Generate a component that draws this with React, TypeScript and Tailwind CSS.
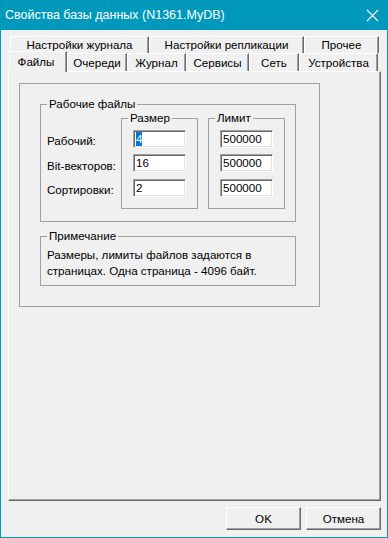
import React from 'react';

const backTabs = [
  { label: 'Настройки журнала', w: 'w-[139px]' },
  { label: 'Настройки репликации', w: 'w-[155px]' },
  { label: 'Прочее', w: 'w-[75px]' },
];

const frontTabs = [
  { label: 'Файлы', w: 'w-[58px]', active: true },
  { label: 'Очереди', w: 'w-[60px]' },
  { label: 'Журнал', w: 'w-[59px]' },
  { label: 'Сервисы', w: 'w-[63px]' },
  { label: 'Сеть', w: 'w-[50px]' },
  { label: 'Устройства', w: 'w-[79px]' },
];

const rows = [
  { label: 'Рабочий:', size: '4', limit: '500000' },
  { label: 'Bit-векторов:', size: '16', limit: '500000' },
  { label: 'Сортировки:', size: '2', limit: '500000' },
];

function Field({ value, selected }: { value: string; selected?: boolean }) {
  return (
    <div className="w-[53px] h-[18px] bg-white border border-t-[#a0a0a0] border-l-[#a0a0a0] border-b-white border-r-white shadow-[inset_1px_1px_0_#696969,inset_-1px_-1px_0_#e3e3e3] pl-[2px] flex items-center leading-[14px]">
      {selected ? <span className="bg-[#0078d7] text-white">{value}</span> : <span>{value}</span>}
    </div>
  );
}

function Group({ title, className, children }: { title: string; className: string; children?: React.ReactNode }) {
  return (
    <fieldset className={`border border-[#a0a0a0] ${className}`}>
      <legend className="ml-[6px] px-[2px] leading-[14px]">{title}</legend>
      {children}
    </fieldset>
  );
}

function Button({ children }: { children: React.ReactNode }) {
  return (
    <button className="w-[75px] h-[23px] bg-[#f0f0f0] border border-t-white border-l-white border-r-[#696969] border-b-[#696969] shadow-[inset_-1px_-1px_0_#a0a0a0] flex items-center justify-center leading-[14px]">
      {children}
    </button>
  );
}

export default function App() {
  return (
    <div className="w-[388px] h-[538px] bg-[#f0f0f0] border border-[#0099bc] flex flex-col font-['Liberation_Sans',Arial,sans-serif] text-[11.6px] text-black">
      {/* Title bar */}
      <div className="h-[29px] shrink-0 bg-[#0099bc] flex items-center justify-between pl-[4px] pr-[7px] text-white">
        <span className="text-[12.5px]">Свойства базы данных (N1361.MyDB)</span>
        <svg width="13" height="13" viewBox="0 0 13 13" className="mr-[1px]">
          <path d="M1 1L12 12M12 1L1 12" stroke="white" strokeWidth="1.1" fill="none" />
        </svg>
      </div>

      <div className="pl-[7px] pr-[6px]">
        {/* Back tab row */}
        <div className="flex mt-[6px] ml-[2px] h-[17px]">
          {backTabs.map((t) => (
            <div
              key={t.label}
              className={`${t.w} h-[17px] border-l border-t border-l-white border-t-white border-r border-r-[#696969] shadow-[inset_-1px_0_0_#a0a0a0] flex items-center justify-center leading-[14px]`}
            >
              {t.label}
            </div>
          ))}
        </div>

        {/* Front tab row */}
        <div className="flex items-end mt-[-2px] ml-[1px] h-[20px] relative z-10">
          {frontTabs.map((t) =>
            t.active ? (
              <div
                key={t.label}
                className={`${t.w} h-[21px] mb-[-1px] bg-[#f0f0f0] border-l border-t border-l-white border-t-white border-r border-r-[#696969] shadow-[inset_-1px_0_0_#a0a0a0] flex items-start justify-center pt-[3px] leading-[14px]`}
              >
                <span className="mr-[4px]">{t.label}</span>
              </div>
            ) : (
              <div
                key={t.label}
                className={`${t.w} h-[18px] border-l border-t border-l-white border-t-white border-r border-r-[#696969] shadow-[inset_-1px_0_0_#a0a0a0] flex items-center justify-center leading-[14px]`}
              >
                {t.label}
              </div>
            )
          )}
        </div>

        {/* Tab panel */}
        <div className="h-[430px] border border-t-white border-l-white border-r-[#696969] border-b-[#696969] shadow-[inset_-1px_-1px_0_#a0a0a0] pl-[10px] pt-[11px]">
          <div className="w-[301px] h-[224px] border border-[#a0a0a0] pl-[20px] pt-[13px]">
            <Group title="Рабочие файлы" className="w-[256px] h-[125px]">
              <div className="flex">
                <div className="w-[80px] pl-[6px] flex flex-col leading-[14px]">
                  <span className="mt-[23px]">{rows[0].label}</span>
                  <span className="mt-[11px]">{rows[1].label}</span>
                  <span className="mt-[10px]">{rows[2].label}</span>
                </div>
                <Group title="Размер" className="w-[77px] h-[98px]">
                  <div className="flex flex-col pl-[11px] pt-[5px]">
                    <Field value={rows[0].size} selected />
                    <div className="mt-[6px]"><Field value={rows[1].size} /></div>
                    <div className="mt-[7px]"><Field value={rows[2].size} /></div>
                  </div>
                </Group>
                <Group title="Лимит" className="w-[77px] h-[98px] ml-[10px]">
                  <div className="flex flex-col pl-[11px] pt-[5px]">
                    <Field value={rows[0].limit} />
                    <div className="mt-[6px]"><Field value={rows[1].limit} /></div>
                    <div className="mt-[7px]"><Field value={rows[2].limit} /></div>
                  </div>
                </Group>
              </div>
            </Group>

            <Group title="Примечание" className="w-[256px] h-[57px] mt-[7px]">
              <p className="pl-[6px] pt-[4px] leading-[16px]">
                Размеры, лимиты файлов задаются в
                <br />
                страницах. Одна страница - 4096 байт.
              </p>
            </Group>
          </div>
        </div>

        {/* Buttons */}
        <div className="flex justify-end gap-[5px] mt-[6px]">
          <Button>OK</Button>
          <Button>Отмена</Button>
        </div>
      </div>
    </div>
  );
}
